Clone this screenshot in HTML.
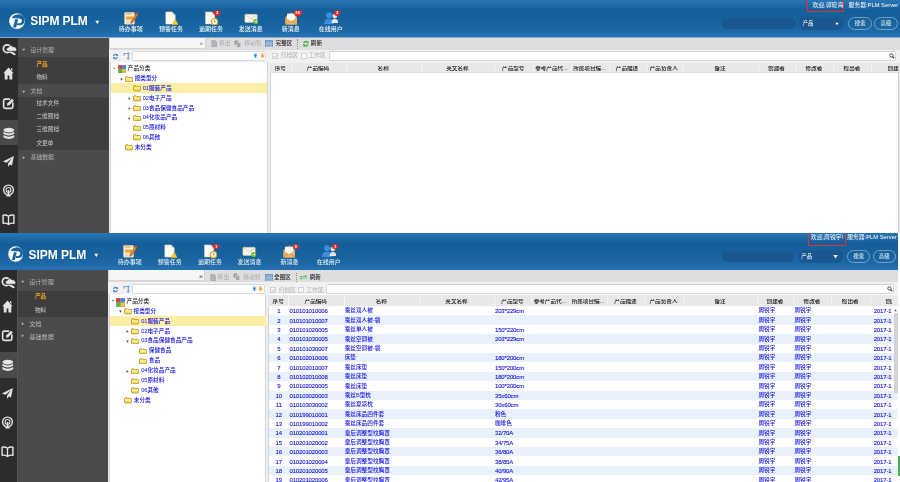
<!DOCTYPE html><html lang="zh-CN"><head><meta charset="utf-8"><title>SIPM PLM</title><style>
*{box-sizing:border-box;margin:0;padding:0}
html,body{width:900px;height:482px;overflow:hidden;background:#fff}
body{position:relative;font-family:"Liberation Sans","Noto Sans CJK SC",sans-serif;font-size:5.6px;color:#222;line-height:1}
.shot{position:absolute;left:0;width:900px;overflow:hidden;background:#fff;filter:blur(.3px)}
.a{position:absolute}
.hdr{position:absolute;left:0;top:0;height:37.9px;background:linear-gradient(#2a76b3 0%,#226dab 10%,#145e9a 27%,#17629d 55%,#1d6aa6 86%,#296fb2 91%,#1b72ae 96%,#8fb4d6 99%,#d8e2ec 100%)}
.title{position:absolute;color:#fff;font-weight:bold;font-size:12px;letter-spacing:-0.05px;white-space:nowrap}
.tl{position:absolute;color:#fff;font-size:6px;font-weight:500;white-space:nowrap;text-align:center;width:40px;opacity:.95}
.isb{position:absolute;left:0;background:#2c2c2c}
.msb{position:absolute;background:#4b4b4b}
.mh{position:absolute;left:0;right:0;color:#b4b4b4;font-size:5.9px;font-weight:400;white-space:nowrap}
.mc{position:absolute;left:0;right:0;background:#3e3e3e}
.mi{position:absolute;left:18.6px;color:#cdcdcd;font-size:5.65px;font-weight:400;white-space:nowrap}
.t{position:absolute;white-space:nowrap}
.tr{position:absolute;white-space:nowrap;font-size:5.65px;color:#0a0ae8;font-weight:500}
.gh{position:absolute;background:#e8e8e8;border-bottom:.5px solid #dcdcdc}
.ght{position:absolute;color:#111;font-size:5.6px;font-weight:500;white-space:nowrap;text-align:center}
.row{position:absolute;left:0;right:0}
.c{position:absolute;color:#1010e6;font-size:5.65px;font-weight:500;white-space:nowrap;top:0}
.n{-webkit-text-stroke:.1px #1010e6;font-size:6px;letter-spacing:-.15px;margin-top:-.2px}
.pill{position:absolute;border:.5px solid rgba(225,235,245,.45);border-radius:7px;color:#fff;font-size:5.4px;text-align:center}
</style></head><body>
<div class="shot" style="top:0;height:233px">
<div class="hdr" style="width:900px"></div>
<svg class="a" style="left:8.85px;top:12.85px" width="16" height="16.2" viewBox="0 0 32 32" preserveAspectRatio="none"><circle cx="16" cy="16" r="15.700" fill="#fdfdfd"/><path d="M5 8.800Q12 1.500 22 2.800Q31.800 5 31.300 15Q30.500 24.300 21 24.300L15.800 24.300L16.800 20.300L21 20.300Q25.800 19.800 26 15.200Q25.800 11.200 21.300 10.800L13 10.600Q8.500 10.600 5 8.800Z" fill="#1a64a4"/><path d="M12.200 12.600L18.300 12.600L14.300 28.600L8.200 28.600Z" fill="#1a64a4"/></svg>
<div class="title" style="left:30.2px;top:15.3px">SIPM PLM</div>
<svg class="a" style="left:95.3px;top:19.6px" width="4.6" height="4.6" viewBox="0 0 8 8"><path d="M0.5 1.5H7.5L4 7Z" fill="#fff"/></svg>
<svg class="a" style="left:123.50px;top:11.10px" width="14.4" height="14.4" viewBox="0 0 24 24"><rect x="1" y="2.500" width="16.500" height="19.500" rx="1.200" fill="#fbf8ee" stroke="#d2c9a8" stroke-width=".9"/><rect x="1.500" y="3" width="15.500" height="4.200" fill="#f3dfb4"/><path d="M3.500 5H12" stroke="#e3962a" stroke-width="1.300"/><rect x="3" y="9" width="12" height="5.500" fill="#f0a63a"/><path d="M3.500 17H9M3.500 19.800H9M11 17H14M11 19.800H14" stroke="#d9b27a" stroke-width="1.300"/><path d="M11.500 17.500L20.500 3.500L23.500 5.500L14.500 19.500L11 21Z" fill="#e27a2c" stroke="#9a531c" stroke-width=".6"/><path d="M20.500 3.500L21.800 1.600L24 3.200L23.500 5.500Z" fill="#d23b2b"/></svg>
<div class="tl" style="left:110.70px;top:25.6px;opacity:0.95">待办事项</div>
<svg class="a" style="left:163.80px;top:11.10px" width="14.4" height="14.4" viewBox="0 0 24 24"><path d="M3 1.500H13.500L18.700 6.700V21.800H3Z" fill="#fcfbf5" stroke="#d6d0bb" stroke-width=".9"/><path d="M13.500 1.500V6.700H18.700Z" fill="#e4dfcd"/><path d="M18.700 13.500L24 22.800H13.400Z" fill="#f3c934" stroke="#caa01a" stroke-width=".7"/></svg>
<div class="tl" style="left:151.00px;top:25.6px;opacity:0.95">预警任务</div>
<svg class="a" style="left:203.80px;top:11.10px" width="14.4" height="14.4" viewBox="0 0 24 24"><path d="M2.500 1.500H13L18 6.500V21.500H2.500Z" fill="#fcfbf5" stroke="#d6d0bb" stroke-width=".9"/><path d="M13 1.500V6.500H18Z" fill="#e4dfcd"/><circle cx="17.500" cy="17.800" r="5.300" fill="#fbf3dd" stroke="#e6a32a" stroke-width="2"/><path d="M17.500 15V18.200H19.800" stroke="#9a7a3a" stroke-width="1.100" fill="none"/></svg>
<div class="tl" style="left:191.00px;top:25.6px;opacity:0.95">逾期任务</div>
<svg class="a" style="left:243.50px;top:11.10px" width="14.4" height="14.4" viewBox="0 0 24 24"><rect x="1.500" y="5.500" width="20.500" height="13.500" rx="1.500" fill="#f8f5e9" stroke="#cfc8ae" stroke-width=".9"/><path d="M2 6L11.800 13.500L21.500 6" fill="none" stroke="#c9c2a8" stroke-width="1.100"/><circle cx="19.500" cy="17.500" r="4.300" fill="#6cba3e"/><path d="M17.300 17.500H21.500M19.800 15.700L21.700 17.500L19.800 19.300" stroke="#fff" stroke-width="1.100" fill="none"/></svg>
<div class="tl" style="left:230.70px;top:25.6px;opacity:0.95">发送消息</div>
<svg class="a" style="left:283.50px;top:11.10px" width="14.4" height="14.4" viewBox="0 0 24 24"><path d="M2.500 9.500L12 2.500L21.500 9.500V22.500H2.500Z" fill="#dd9a48"/><rect x="5" y="4.500" width="14" height="12" fill="#fcfbf7"/><path d="M2.500 10.500L12 17.500L21.500 10.500V22.500H2.500Z" fill="#ebb366"/><path d="M2.500 22.500L10 16M21.500 22.500L14 16" stroke="#c98a3a" stroke-width=".8"/></svg>
<div class="tl" style="left:270.70px;top:25.6px;opacity:0.95">新消息</div>
<svg class="a" style="left:323.50px;top:11.10px" width="14.4" height="14.4" viewBox="0 0 24 24"><circle cx="8.500" cy="7" r="4.800" fill="#3b8fe0"/><path d="M0 21.500Q0 12.800 8.500 12.800Q17 12.800 17 21.500Z" fill="#3b8fe0"/><circle cx="18" cy="8.500" r="3.800" fill="#ece7da"/><path d="M12.500 20Q12.500 13.500 18 13.500Q24 13.500 24 20Z" fill="#ece7da"/></svg>
<div class="tl" style="left:310.70px;top:25.6px;opacity:0.95">在线用户</div>
<div class="a" style="left:214.30px;top:10.40px;width:5.80px;height:5.80px;border-radius:2.9px;background:#e02a2a;color:#fff;font-size:4.2px;line-height:5.80px;text-align:center;font-weight:bold">2</div>
<div class="a" style="left:293.70px;top:10.40px;width:8.00px;height:5.80px;border-radius:2.9px;background:#e02a2a;color:#fff;font-size:4.2px;line-height:5.80px;text-align:center;font-weight:bold">26</div>
<div class="a" style="left:334.30px;top:10.40px;width:5.80px;height:5.80px;border-radius:2.9px;background:#e02a2a;color:#fff;font-size:4.2px;line-height:5.80px;text-align:center;font-weight:bold">2</div>
<div class="a" style="left:807.3px;top:-1px;width:36.700000000000045px;height:13.4px;border:1.15px solid #e8312f"></div>
<div class="t" style="left:812.4px;top:3.0px;color:#fff;font-size:5.85px">欢迎,郭晓海</div>
<div class="t" style="left:848.6px;top:3.0px;color:#fff;font-size:5.8px">服务器:PLM Server</div>
<div class="a" style="left:722px;top:18.2px;width:73.5px;height:11.000000000000002px;border-radius:5px;background:#1a5690"></div>
<div class="a" style="left:799.3px;top:17.4px;width:44.700000000000045px;height:12.600000000000001px;border-radius:6px;background:#1a5690;color:#fff;font-size:5.4px;line-height:12.600000000000001px;padding-left:3.3px">产品</div>
<svg class="a" style="left:834.8000000000001px;top:22.0px" width="3.8" height="3.8" viewBox="0 0 8 8"><path d="M0.5 1.5H7.5L4 7Z" fill="#fff"/></svg>
<div class="pill" style="left:848.3px;top:17.4px;width:23.700000000000045px;height:12.600000000000001px;line-height:11.400000000000002px">搜索</div>
<div class="pill" style="left:874px;top:17.4px;width:24px;height:12.600000000000001px;line-height:11.400000000000002px">高级</div>
<div class="isb" style="top:37.5px;width:17.9px;height:195.5px"></div>
<div class="a" style="left:0;top:120.3px;width:17.9px;height:25px;background:#4a4a4a"></div>
<svg class="a" style="left:1.80px;top:41.70px" width="15" height="15" viewBox="0 0 24 24"><circle cx="8.300" cy="10.700" r="6.100" fill="none" stroke="#e6e6e6" stroke-width="2.800"/><path d="M13.800 15.800L20.300 19.800" stroke="#e6e6e6" stroke-width="3" stroke-linecap="round"/><path d="M9.800 14.800a3 3 0 0 1 .2-6a4.300 4.300 0 0 1 7.800-.9a3.300 3.300 0 0 1 4.700 2.600a2.300 2.300 0 0 1-.6 4.300Z" fill="#e6e6e6" stroke="#2c2c2c" stroke-width="1.100"/></svg>
<svg class="a" style="left:2.20px;top:67.30px" width="13" height="13" viewBox="0 0 24 24"><path d="M12 1L2.500 11.500H5V23H10.300V15.500H13.700V23H19V11.500H21.500Z" fill="#e4e4e4"/><path d="M16.500 2.500H19V7.500L16.500 5Z" fill="#e4e4e4"/></svg>
<svg class="a" style="left:2.20px;top:97.00px" width="13" height="13" viewBox="0 0 24 24"><path d="M14 4H6Q3 4 3 7V18Q3 21 6 21H17Q20 21 20 18V11" fill="none" stroke="#e2e2e2" stroke-width="3" stroke-linecap="round"/><path d="M9 16L10 11.5L18.5 3L22 6.5L13.5 15Z" fill="#e2e2e2"/></svg>
<svg class="a" style="left:1.90px;top:126.90px" width="13.6" height="13.6" viewBox="0 0 24 24"><ellipse cx="12" cy="5.5" rx="9.5" ry="4" fill="#e6e6e6"/><path d="M2.5 8.5Q12 14.5 21.500 8.5V12Q12 18 2.5 12Z" fill="#e6e6e6"/><path d="M2.5 14Q12 20 21.5 14V18Q12 24 2.5 18Z" fill="#e6e6e6"/></svg>
<svg class="a" style="left:2.20px;top:154.50px" width="13" height="13" viewBox="0 0 24 24"><path d="M22 2L1.5 12L8.5 14.5L18 6L11 16V22L14.5 17.5L18.5 19.5Z" fill="#e2e2e2"/></svg>
<svg class="a" style="left:2.20px;top:183.50px" width="13" height="13" viewBox="0 0 24 24"><circle cx="12" cy="11" r="9" fill="none" stroke="#e2e2e2" stroke-width="2.6"/><circle cx="12" cy="11" r="4.4" fill="none" stroke="#e2e2e2" stroke-width="2"/><path d="M12 11V22" stroke="#e2e2e2" stroke-width="3"/><path d="M8 22H16" stroke="#e2e2e2" stroke-width="2.4"/></svg>
<svg class="a" style="left:2.20px;top:212.50px" width="13" height="13" viewBox="0 0 24 24"><path d="M12 6Q8 3 2 4V19Q8 18 12 21Q16 18 22 19V4Q16 3 12 6Z" fill="none" stroke="#e6e6e6" stroke-width="2.6" stroke-linejoin="round"/><path d="M12 6V21" stroke="#e6e6e6" stroke-width="2.4"/></svg>
<div class="msb" style="left:17.9px;top:37.5px;width:90.8px;height:195.5px">
<div class="mc" style="top:19.2px;height:27.4px"></div>
<div class="mc" style="top:59.9px;height:52.5px"></div>
<div class="mh" style="top:10.100000000000001px;left:12.5px;font-size:5.9px">设计管理</div><svg class="a" style="left:4.2px;top:10.9px" width="3.5" height="3.5" viewBox="0 0 8 8"><path d="M0.5 1.5H7.5L4 7Z" fill="#b4b4b4"/></svg>
<div class="mi" style="top:24.3px;color:#f0a11c;font-weight:bold">产品</div>
<div class="mi" style="top:37.5px">物料</div>
<div class="mh" style="top:51.199999999999996px;left:12.5px;font-size:5.9px">文档</div><svg class="a" style="left:4.2px;top:52.0px" width="3.5" height="3.5" viewBox="0 0 8 8"><path d="M0.5 1.5H7.5L4 7Z" fill="#b4b4b4"/></svg>
<div class="mi" style="top:63.7px">技术文件</div>
<div class="mi" style="top:76.8px">二维图档</div>
<div class="mi" style="top:89.9px">三维图档</div>
<div class="mi" style="top:103.0px">文更单</div>
<div class="mh" style="top:117.3px;left:12.5px;font-size:5.9px">基础数据</div><svg class="a" style="left:4.2px;top:118.1px" width="3.5" height="3.5" viewBox="0 0 8 8"><path d="M1.5 0.5V7.5L7 4Z" fill="#b4b4b4"/></svg>
</div>
<div class="a" style="left:108.7px;top:37.5px;width:791.3px;height:12px;background:#dedede"></div>
<div class="a" style="left:108.7px;top:37.5px;width:97px;height:11px;background:#f6f6f6;border:.5px solid #d4d4d4;border-top:none"></div>
<div class="t" style="left:200px;top:40.6px;font-size:5px;color:#555">»</div>
<svg class="a" style="left:211px;top:39.7px" width="6.5" height="7.5" viewBox="0 0 13 15"><path d="M1.500 1H8.500L11.500 4V14H1.500Z" fill="#b4b4b4" stroke="#9a9a9a" stroke-width="1"/></svg>
<div class="t" style="left:219.3px;top:40.7px;color:#a9a9a9">移出</div>
<svg class="a" style="left:234.2px;top:39.5px" width="7.500" height="8" viewBox="0 0 15 16"><rect x="1" y="1" width="7.500" height="8.500" fill="#9c9c9c"/><rect x="5.500" y="5.500" width="8" height="9" fill="#a6a6a6" stroke="#dedede" stroke-width="1"/></svg>
<div class="t" style="left:244.6px;top:40.7px;color:#a9a9a9">移动到</div>
<svg class="a" style="left:264.5px;top:39.8px" width="8" height="7.4" viewBox="0 0 16 15"><rect x=".8" y=".8" width="14.400" height="13.400" fill="#dbe7f3" stroke="#4a86c4" stroke-width="1.500"/><rect x="2.200" y="2.200" width="11.600" height="7.300" fill="#6fa8de"/><rect x="2.200" y="9.500" width="11.600" height="3.300" fill="#9aa4ae"/><path d="M3 8.500L6.500 5.500L9 7.500L11 6L13.500 8.500" stroke="#e8f2fb" stroke-width="1" fill="none"/></svg>
<div class="t" style="left:275.6px;top:40.7px;color:#222;font-weight:500">完整区</div>
<div class="a" style="left:297px;top:39.0px;width:0;height:9.5px;border-left:.7px dotted #8a8a8a"></div>
<svg class="a" style="left:301.5px;top:39.8px" width="7.6" height="7.6" viewBox="0 0 16 16"><path d="M2.500 7A5.500 5.500 0 0 1 12 3.500L13.500 2V7H8.500L10.300 5.200A3.400 3.400 0 0 0 4.800 7Z" fill="#3aa83a"/><path d="M13.500 9A5.500 5.500 0 0 1 4 12.500L2.500 14V9H7.500L5.700 10.800A3.400 3.400 0 0 0 11.200 9Z" fill="#3aa83a"/></svg>
<div class="t" style="left:310.8px;top:40.7px;color:#222;font-weight:500">刷新</div>
<div class="a" style="left:108.7px;top:49.5px;width:791.3px;height:13.5px;background:#f1f1f1"></div>
<svg class="a" style="left:112.400px;top:52.5px" width="7" height="7" viewBox="0 0 16 16"><path d="M2.500 7A5.500 5.500 0 0 1 12 3.500L13.500 2V7H8.500L10.300 5.200A3.400 3.400 0 0 0 4.800 7Z" fill="#3a82d8"/><path d="M13.500 9A5.500 5.500 0 0 1 4 12.500L2.500 14V9H7.500L5.700 10.800A3.400 3.400 0 0 0 11.200 9Z" fill="#3a82d8"/></svg>
<svg class="a" style="left:122.800px;top:52.1px" width="7.500" height="8" viewBox="0 0 15 16"><path d="M2 3H7M2 3V7M10.500 2V14M8.500 4L10.500 1.500L12.500 4M8.500 12L10.500 14.500L12.500 12" stroke="#4a80c8" stroke-width="1.700" fill="none"/></svg>
<div class="a" style="left:132.4px;top:51.3px;width:133.6px;height:9.3px;background:#fff;border:.6px solid #d9d9d9;border-radius:1.5px"></div>
<svg class="a" style="left:253px;top:53.1px" width="5" height="5.400" viewBox="0 0 10 11"><rect width="10" height="11" fill="#dbeaf8"/><path d="M5 1.500L8.500 5.500H6.300V9.500H3.700V5.500H1.500Z" fill="#2f86d6"/></svg>
<svg class="a" style="left:259.8px;top:53.1px" width="5" height="5.400" viewBox="0 0 10 11"><rect width="10" height="11" fill="#fdebd2"/><path d="M5 9.500L1.500 5.500H3.700V1.500H6.300V5.500H8.500Z" fill="#f08a1c"/></svg>
<div class="a" style="left:272.2px;top:52.8px;width:6px;height:6px;border:.6px solid #d2d2d2;background:#fafafa"></div>
<svg class="a" style="left:273.0px;top:53.5px" width="4.600" height="4.600" viewBox="0 0 10 10"><path d="M1.500 5L4 8L8.500 1.500" stroke="#a8a8a8" stroke-width="1.600" fill="none"/></svg>
<div class="t" style="left:280.59999999999997px;top:53.4px;color:#b0b0b0;font-size:5.800px">归档区</div>
<div class="a" style="left:300.59999999999997px;top:52.8px;width:6px;height:6px;border:.6px solid #d2d2d2;background:#fcfcfc"></div>
<div class="t" style="left:308.5px;top:53.4px;color:#b0b0b0;font-size:5.800px">工作区</div>
<div class="a" style="left:328.59999999999997px;top:51.3px;width:567.6000000000001px;height:9.3px;background:#fff;border:.6px solid #d2d2d2;border-radius:1.500px"></div>
<svg class="a" style="left:889.4px;top:53.2px" width="5.800" height="5.800" viewBox="0 0 12 12"><circle cx="5" cy="5" r="3.400" fill="none" stroke="#333" stroke-width="1.800"/><path d="M7.500 7.500L11 11" stroke="#333" stroke-width="2.400"/></svg>
<div class="a" style="left:110px;top:62px;width:157.5px;height:171px;background:#fff;border-left:.5px solid #d4d4d4;border-right:.5px solid #d0d0d0"></div>
<div class="a" style="left:108.7px;top:62px;width:1.6px;height:171px;background:#e9e9e9"></div>
<div class="a" style="left:267.5px;top:49.5px;width:2.7px;height:183.5px;background:#f0f0f0"></div>
<div class="a" style="left:110.5px;top:83.3px;width:156.5px;height:9.6px;background:#fdeea6"></div>
<svg class="a" style="left:112.8px;top:66.5px" width="2.6" height="2.6" viewBox="0 0 8 8"><path d="M1.5 0.5V7.5L7 4Z" fill="#555"/></svg>
<svg class="a" style="left:117.9px;top:65.0px" width="8.2" height="8.2" viewBox="0 0 16 16"><rect width="16" height="16" fill="#555" opacity=".55"/><rect x="0.5" y="0.5" width="7" height="7" fill="#e23b2e"/><rect x="8.5" y="0.5" width="7" height="7" fill="#3b86e0"/><rect x="0.5" y="8.5" width="7" height="7" fill="#59b847"/><rect x="8.5" y="8.5" width="7" height="7" fill="#f2c230"/></svg>
<div class="tr" style="left:127.8px;top:66.0px;color:#222">产品分类</div>
<svg class="a" style="left:119.8px;top:77.60000000000001px" width="3" height="3" viewBox="0 0 8 8"><path d="M0.5 1.5H7.5L4 7Z" fill="#444"/></svg>
<svg class="a" style="left:125.1px;top:75.65px" width="8.2" height="6.4" viewBox="0 0 16 13" preserveAspectRatio="none"><path d="M1 3.200Q1 1.500 2.600 1.500H5.800L7.200 3H13.400Q15 3 15 4.600V10.400Q15 12 13.400 12H2.600Q1 12 1 10.400Z" fill="#f3d858" stroke="#b08a14" stroke-width="1.500"/><path d="M2 4.600H14V7.500H2Z" fill="#fcf3b4"/><path d="M2 7.500H14V9H2Z" fill="#f8e68a"/></svg>
<div class="tr" style="left:134.7px;top:76.10000000000001px">按类型分</div>
<svg class="a" style="left:132.70000000000002px;top:85.45px" width="8.2" height="6.4" viewBox="0 0 16 13" preserveAspectRatio="none"><path d="M1 3.200Q1 1.500 2.600 1.500H5.800L7.200 3H13.400Q15 3 15 4.600V10.400Q15 12 13.400 12H2.600Q1 12 1 10.400Z" fill="#f3d858" stroke="#b08a14" stroke-width="1.500"/><path d="M2 4.600H14V7.500H2Z" fill="#fcf3b4"/><path d="M2 7.500H14V9H2Z" fill="#f8e68a"/></svg>
<div class="tr" style="left:142.7px;top:85.9px">01服装产品</div>
<svg class="a" style="left:127.6px;top:97.2px" width="3" height="3" viewBox="0 0 8 8"><path d="M1.5 0.5V7.5L7 4Z" fill="#444"/></svg>
<svg class="a" style="left:132.70000000000002px;top:95.25px" width="8.2" height="6.4" viewBox="0 0 16 13" preserveAspectRatio="none"><path d="M1 3.200Q1 1.500 2.600 1.500H5.800L7.200 3H13.400Q15 3 15 4.600V10.400Q15 12 13.400 12H2.600Q1 12 1 10.400Z" fill="#f3d858" stroke="#b08a14" stroke-width="1.500"/><path d="M2 4.600H14V7.500H2Z" fill="#fcf3b4"/><path d="M2 7.500H14V9H2Z" fill="#f8e68a"/></svg>
<div class="tr" style="left:142.7px;top:95.7px">02电子产品</div>
<svg class="a" style="left:127.6px;top:107.0px" width="3" height="3" viewBox="0 0 8 8"><path d="M1.5 0.5V7.5L7 4Z" fill="#444"/></svg>
<svg class="a" style="left:132.70000000000002px;top:105.05px" width="8.2" height="6.4" viewBox="0 0 16 13" preserveAspectRatio="none"><path d="M1 3.200Q1 1.500 2.600 1.500H5.800L7.200 3H13.400Q15 3 15 4.600V10.400Q15 12 13.400 12H2.600Q1 12 1 10.400Z" fill="#f3d858" stroke="#b08a14" stroke-width="1.500"/><path d="M2 4.600H14V7.500H2Z" fill="#fcf3b4"/><path d="M2 7.500H14V9H2Z" fill="#f8e68a"/></svg>
<div class="tr" style="left:142.7px;top:105.5px">03食品保健食品产品</div>
<svg class="a" style="left:127.6px;top:116.80000000000001px" width="3" height="3" viewBox="0 0 8 8"><path d="M1.5 0.5V7.5L7 4Z" fill="#444"/></svg>
<svg class="a" style="left:132.70000000000002px;top:114.85000000000001px" width="8.2" height="6.4" viewBox="0 0 16 13" preserveAspectRatio="none"><path d="M1 3.200Q1 1.500 2.600 1.500H5.800L7.200 3H13.400Q15 3 15 4.600V10.400Q15 12 13.400 12H2.600Q1 12 1 10.400Z" fill="#f3d858" stroke="#b08a14" stroke-width="1.500"/><path d="M2 4.600H14V7.500H2Z" fill="#fcf3b4"/><path d="M2 7.500H14V9H2Z" fill="#f8e68a"/></svg>
<div class="tr" style="left:142.7px;top:115.30000000000001px">04化妆品产品</div>
<svg class="a" style="left:132.70000000000002px;top:124.64999999999999px" width="8.2" height="6.4" viewBox="0 0 16 13" preserveAspectRatio="none"><path d="M1 3.200Q1 1.500 2.600 1.500H5.800L7.200 3H13.400Q15 3 15 4.600V10.400Q15 12 13.400 12H2.600Q1 12 1 10.400Z" fill="#f3d858" stroke="#b08a14" stroke-width="1.500"/><path d="M2 4.600H14V7.500H2Z" fill="#fcf3b4"/><path d="M2 7.500H14V9H2Z" fill="#f8e68a"/></svg>
<div class="tr" style="left:142.7px;top:125.1px">05原材料</div>
<svg class="a" style="left:132.70000000000002px;top:134.45000000000002px" width="8.2" height="6.4" viewBox="0 0 16 13" preserveAspectRatio="none"><path d="M1 3.200Q1 1.500 2.600 1.500H5.800L7.200 3H13.400Q15 3 15 4.600V10.400Q15 12 13.400 12H2.600Q1 12 1 10.400Z" fill="#f3d858" stroke="#b08a14" stroke-width="1.500"/><path d="M2 4.600H14V7.500H2Z" fill="#fcf3b4"/><path d="M2 7.500H14V9H2Z" fill="#f8e68a"/></svg>
<div class="tr" style="left:142.7px;top:134.9px">06其他</div>
<svg class="a" style="left:125.1px;top:144.25000000000003px" width="8.2" height="6.4" viewBox="0 0 16 13" preserveAspectRatio="none"><path d="M1 3.200Q1 1.500 2.600 1.500H5.800L7.200 3H13.400Q15 3 15 4.600V10.400Q15 12 13.400 12H2.600Q1 12 1 10.400Z" fill="#f3d858" stroke="#b08a14" stroke-width="1.500"/><path d="M2 4.600H14V7.500H2Z" fill="#fcf3b4"/><path d="M2 7.500H14V9H2Z" fill="#f8e68a"/></svg>
<div class="tr" style="left:134.7px;top:144.70000000000002px">未分类</div>
<div class="a" style="left:270px;top:62.7px;width:630px;height:170.3px;background:#fff;border-left:.5px solid #d0d0d0"></div>
<div class="gh" style="left:270px;top:62.7px;width:630px;height:10.0px"></div>
<div class="ght" style="left:270px;width:20.5px;top:65.7px;overflow:hidden">序号</div>
<div class="ght" style="left:290.5px;width:55.0px;top:65.7px;overflow:hidden">产品编码</div>
<div class="a" style="left:290.5px;top:63.7px;width:.5px;height:8.0px;background:#f4f4f4;box-shadow:-.4px 0 0 #e0e0e0"></div>
<div class="ght" style="left:345.5px;width:75.30000000000001px;top:65.7px;overflow:hidden">名称</div>
<div class="a" style="left:345.5px;top:63.7px;width:.5px;height:8.0px;background:#f4f4f4;box-shadow:-.4px 0 0 #e0e0e0"></div>
<div class="ght" style="left:420.8px;width:73.19999999999999px;top:65.7px;overflow:hidden">英文名称</div>
<div class="a" style="left:420.8px;top:63.7px;width:.5px;height:8.0px;background:#f4f4f4;box-shadow:-.4px 0 0 #e0e0e0"></div>
<div class="ght" style="left:494px;width:38.5px;top:65.7px;overflow:hidden">产品型号</div>
<div class="a" style="left:494px;top:63.7px;width:.5px;height:8.0px;background:#f4f4f4;box-shadow:-.4px 0 0 #e0e0e0"></div>
<div class="ght" style="left:532.5px;width:38.0px;top:65.7px;overflow:hidden">参考产品代...</div>
<div class="a" style="left:532.5px;top:63.7px;width:.5px;height:8.0px;background:#f4f4f4;box-shadow:-.4px 0 0 #e0e0e0"></div>
<div class="ght" style="left:570.5px;width:38.0px;top:65.7px;overflow:hidden">所属项目编...</div>
<div class="a" style="left:570.5px;top:63.7px;width:.5px;height:8.0px;background:#f4f4f4;box-shadow:-.4px 0 0 #e0e0e0"></div>
<div class="ght" style="left:608.5px;width:37.0px;top:65.7px;overflow:hidden">产品描述</div>
<div class="a" style="left:608.5px;top:63.7px;width:.5px;height:8.0px;background:#f4f4f4;box-shadow:-.4px 0 0 #e0e0e0"></div>
<div class="ght" style="left:645.5px;width:36.5px;top:65.7px;overflow:hidden">产品负责人</div>
<div class="a" style="left:645.5px;top:63.7px;width:.5px;height:8.0px;background:#f4f4f4;box-shadow:-.4px 0 0 #e0e0e0"></div>
<div class="ght" style="left:682px;width:76px;top:65.7px;overflow:hidden">备注</div>
<div class="a" style="left:682px;top:63.7px;width:.5px;height:8.0px;background:#f4f4f4;box-shadow:-.4px 0 0 #e0e0e0"></div>
<div class="ght" style="left:758px;width:37px;top:65.7px;overflow:hidden">创建者</div>
<div class="a" style="left:758px;top:63.7px;width:.5px;height:8.0px;background:#f4f4f4;box-shadow:-.4px 0 0 #e0e0e0"></div>
<div class="ght" style="left:795px;width:38px;top:65.7px;overflow:hidden">修改者</div>
<div class="a" style="left:795px;top:63.7px;width:.5px;height:8.0px;background:#f4f4f4;box-shadow:-.4px 0 0 #e0e0e0"></div>
<div class="ght" style="left:833px;width:38px;top:65.7px;overflow:hidden">检出者</div>
<div class="a" style="left:833px;top:63.7px;width:.5px;height:8.0px;background:#f4f4f4;box-shadow:-.4px 0 0 #e0e0e0"></div>
<div class="ght" style="left:887.6px;top:65.7px;text-align:left;overflow:hidden;width:30px">创建时间</div>
<div class="a" style="left:871px;top:63.7px;width:.5px;height:8.0px;background:#f4f4f4;box-shadow:-.4px 0 0 #e0e0e0"></div>
<div class="a" style="left:897.700px;top:62.700px;width:2.300px;height:170.3px;background:#e6e6e6;border-left:.5px solid #cfcfcf"></div>
</div>
<div class="shot" style="top:232.8px;height:249.2px">
<div class="hdr" style="width:898px"></div>
<svg class="a" style="left:7.95px;top:13.50px" width="15.3" height="15.8" viewBox="0 0 32 32" preserveAspectRatio="none"><circle cx="16" cy="16" r="15.700" fill="#fdfdfd"/><path d="M5 8.800Q12 1.500 22 2.800Q31.800 5 31.300 15Q30.500 24.300 21 24.300L15.800 24.300L16.800 20.300L21 20.300Q25.800 19.800 26 15.200Q25.800 11.200 21.300 10.800L13 10.600Q8.500 10.600 5 8.800Z" fill="#1a64a4"/><path d="M12.200 12.600L18.300 12.600L14.300 28.600L8.200 28.600Z" fill="#1a64a4"/></svg>
<div class="title" style="left:28.6px;top:15.9px">SIPM PLM</div>
<svg class="a" style="left:94px;top:20.2px" width="4.6" height="4.6" viewBox="0 0 8 8"><path d="M0.5 1.5H7.5L4 7Z" fill="#fff"/></svg>
<svg class="a" style="left:122.50px;top:11.50px" width="14.4" height="14.4" viewBox="0 0 24 24"><rect x="1" y="2.500" width="16.500" height="19.500" rx="1.200" fill="#fbf8ee" stroke="#d2c9a8" stroke-width=".9"/><rect x="1.500" y="3" width="15.500" height="4.200" fill="#f3dfb4"/><path d="M3.500 5H12" stroke="#e3962a" stroke-width="1.300"/><rect x="3" y="9" width="12" height="5.500" fill="#f0a63a"/><path d="M3.500 17H9M3.500 19.800H9M11 17H14M11 19.800H14" stroke="#d9b27a" stroke-width="1.300"/><path d="M11.500 17.500L20.500 3.500L23.500 5.500L14.500 19.500L11 21Z" fill="#e27a2c" stroke="#9a531c" stroke-width=".6"/><path d="M20.500 3.500L21.800 1.600L24 3.200L23.500 5.500Z" fill="#d23b2b"/></svg>
<div class="tl" style="left:109.70px;top:26.2px;opacity:0.88">待办事项</div>
<svg class="a" style="left:162.50px;top:11.50px" width="14.4" height="14.4" viewBox="0 0 24 24"><path d="M3 1.500H13.500L18.700 6.700V21.800H3Z" fill="#fcfbf5" stroke="#d6d0bb" stroke-width=".9"/><path d="M13.500 1.500V6.700H18.700Z" fill="#e4dfcd"/><path d="M18.700 13.500L24 22.800H13.400Z" fill="#f3c934" stroke="#caa01a" stroke-width=".7"/></svg>
<div class="tl" style="left:149.70px;top:26.2px;opacity:0.88">预警任务</div>
<svg class="a" style="left:202.70px;top:11.50px" width="14.4" height="14.4" viewBox="0 0 24 24"><path d="M2.500 1.500H13L18 6.500V21.500H2.500Z" fill="#fcfbf5" stroke="#d6d0bb" stroke-width=".9"/><path d="M13 1.500V6.500H18Z" fill="#e4dfcd"/><circle cx="17.500" cy="17.800" r="5.300" fill="#fbf3dd" stroke="#e6a32a" stroke-width="2"/><path d="M17.500 15V18.200H19.800" stroke="#9a7a3a" stroke-width="1.100" fill="none"/></svg>
<div class="tl" style="left:189.90px;top:26.2px;opacity:0.88">逾期任务</div>
<svg class="a" style="left:242.40px;top:11.50px" width="14.4" height="14.4" viewBox="0 0 24 24"><rect x="1.500" y="5.500" width="20.500" height="13.500" rx="1.500" fill="#f8f5e9" stroke="#cfc8ae" stroke-width=".9"/><path d="M2 6L11.800 13.500L21.500 6" fill="none" stroke="#c9c2a8" stroke-width="1.100"/><circle cx="19.500" cy="17.500" r="4.300" fill="#6cba3e"/><path d="M17.300 17.500H21.500M19.800 15.700L21.700 17.500L19.800 19.300" stroke="#fff" stroke-width="1.100" fill="none"/></svg>
<div class="tl" style="left:229.60px;top:26.2px;opacity:0.88">发送消息</div>
<svg class="a" style="left:282.20px;top:11.50px" width="14.4" height="14.4" viewBox="0 0 24 24"><path d="M2.500 9.500L12 2.500L21.500 9.500V22.500H2.500Z" fill="#dd9a48"/><rect x="5" y="4.500" width="14" height="12" fill="#fcfbf7"/><path d="M2.500 10.500L12 17.500L21.500 10.500V22.500H2.500Z" fill="#ebb366"/><path d="M2.500 22.500L10 16M21.500 22.500L14 16" stroke="#c98a3a" stroke-width=".8"/></svg>
<div class="tl" style="left:269.40px;top:26.2px;opacity:0.88">新消息</div>
<svg class="a" style="left:321.60px;top:11.50px" width="14.4" height="14.4" viewBox="0 0 24 24"><circle cx="8.500" cy="7" r="4.800" fill="#3b8fe0"/><path d="M0 21.500Q0 12.800 8.500 12.800Q17 12.800 17 21.500Z" fill="#3b8fe0"/><circle cx="18" cy="8.500" r="3.800" fill="#ece7da"/><path d="M12.500 20Q12.500 13.500 18 13.500Q24 13.500 24 20Z" fill="#ece7da"/></svg>
<div class="tl" style="left:308.80px;top:26.2px;opacity:0.88">在线用户</div>
<div class="a" style="left:213.20px;top:10.80px;width:5.80px;height:5.80px;border-radius:2.9px;background:#e02a2a;color:#fff;font-size:4.2px;line-height:5.80px;text-align:center;font-weight:bold">1</div>
<div class="a" style="left:292.80px;top:10.80px;width:5.80px;height:5.80px;border-radius:2.9px;background:#e02a2a;color:#fff;font-size:4.2px;line-height:5.80px;text-align:center;font-weight:bold">9</div>
<div class="a" style="left:332.40px;top:10.80px;width:5.80px;height:5.80px;border-radius:2.9px;background:#e02a2a;color:#fff;font-size:4.2px;line-height:5.80px;text-align:center;font-weight:bold">1</div>
<div class="a" style="left:808px;top:-0.8px;width:37.700000000000045px;height:13.700000000000001px;border:1.15px solid #e8312f"></div>
<div class="t" style="left:810.8px;top:1.8px;color:#fff;font-size:5.85px">欢迎,周锐宇!</div>
<div class="t" style="left:847.2px;top:1.8px;color:#fff;font-size:5.8px">服务器:PLM Server</div>
<div class="a" style="left:722px;top:18.400000000000002px;width:72px;height:10.999999999999998px;border-radius:5px;background:#1a5690"></div>
<div class="a" style="left:798px;top:17.6px;width:44.5px;height:12.599999999999998px;border-radius:6px;background:#1a5690;color:#fff;font-size:5.4px;line-height:12.599999999999998px;padding-left:3.3px">产品</div>
<svg class="a" style="left:832.6px;top:21.499999999999996px" width="5.2" height="5.2" viewBox="0 0 8 8"><path d="M0.5 1.5H7.5L4 7Z" fill="#fff"/></svg>
<div class="pill" style="left:846.8px;top:17.6px;width:23.700000000000045px;height:12.599999999999998px;line-height:11.399999999999999px">搜索</div>
<div class="pill" style="left:872.8px;top:17.6px;width:22.90000000000009px;height:12.599999999999998px;line-height:11.399999999999999px">高级</div>
<div class="isb" style="top:37.3px;width:16.9px;height:211.89999999999998px"></div>
<div class="a" style="left:0;top:119.6px;width:16.9px;height:25.2px;background:#4a4a4a"></div>
<svg class="a" style="left:0.60px;top:42.10px" width="15" height="15" viewBox="0 0 24 24"><circle cx="8.300" cy="10.700" r="6.100" fill="none" stroke="#e6e6e6" stroke-width="2.800"/><path d="M13.800 15.800L20.300 19.800" stroke="#e6e6e6" stroke-width="3" stroke-linecap="round"/><path d="M9.800 14.800a3 3 0 0 1 .2-6a4.300 4.300 0 0 1 7.800-.9a3.300 3.300 0 0 1 4.700 2.600a2.300 2.300 0 0 1-.6 4.300Z" fill="#e6e6e6" stroke="#2c2c2c" stroke-width="1.100"/></svg>
<svg class="a" style="left:1.00px;top:67.00px" width="13" height="13" viewBox="0 0 24 24"><path d="M12 1L2.500 11.500H5V23H10.300V15.500H13.700V23H19V11.500H21.500Z" fill="#e4e4e4"/><path d="M16.500 2.500H19V7.500L16.500 5Z" fill="#e4e4e4"/></svg>
<svg class="a" style="left:1.00px;top:96.10px" width="13" height="13" viewBox="0 0 24 24"><path d="M14 4H6Q3 4 3 7V18Q3 21 6 21H17Q20 21 20 18V11" fill="none" stroke="#e2e2e2" stroke-width="3" stroke-linecap="round"/><path d="M9 16L10 11.5L18.5 3L22 6.5L13.5 15Z" fill="#e2e2e2"/></svg>
<svg class="a" style="left:0.70px;top:126.60px" width="13.6" height="13.6" viewBox="0 0 24 24"><ellipse cx="12" cy="5.5" rx="9.5" ry="4" fill="#e6e6e6"/><path d="M2.5 8.5Q12 14.5 21.500 8.5V12Q12 18 2.5 12Z" fill="#e6e6e6"/><path d="M2.5 14Q12 20 21.5 14V18Q12 24 2.5 18Z" fill="#e6e6e6"/></svg>
<svg class="a" style="left:1.00px;top:154.70px" width="13" height="13" viewBox="0 0 24 24"><path d="M22 2L1.5 12L8.5 14.5L18 6L11 16V22L14.5 17.5L18.5 19.5Z" fill="#e2e2e2"/></svg>
<svg class="a" style="left:1.00px;top:183.70px" width="13" height="13" viewBox="0 0 24 24"><circle cx="12" cy="11" r="9" fill="none" stroke="#e2e2e2" stroke-width="2.6"/><circle cx="12" cy="11" r="4.4" fill="none" stroke="#e2e2e2" stroke-width="2"/><path d="M12 11V22" stroke="#e2e2e2" stroke-width="3"/><path d="M8 22H16" stroke="#e2e2e2" stroke-width="2.4"/></svg>
<svg class="a" style="left:1.00px;top:212.00px" width="13" height="13" viewBox="0 0 24 24"><path d="M12 6Q8 3 2 4V19Q8 18 12 21Q16 18 22 19V4Q16 3 12 6Z" fill="none" stroke="#e6e6e6" stroke-width="2.6" stroke-linejoin="round"/><path d="M12 6V21" stroke="#e6e6e6" stroke-width="2.4"/></svg>
<div class="msb" style="left:16.9px;top:37.3px;width:90.8px;border-left:.5px solid #565656;height:211.89999999999998px">
<div class="mc" style="top:20.6px;height:26.1px"></div>
<div class="mh" style="top:8.899999999999999px;left:11.3px;font-size:6.2px">设计管理</div><svg class="a" style="left:3.6px;top:9.7px" width="3.5" height="3.5" viewBox="0 0 8 8"><path d="M0.5 1.5H7.5L4 7Z" fill="#b4b4b4"/></svg>
<div class="mi" style="left:17.1px;top:24.2px;color:#f0a11c;font-weight:bold">产品</div>
<div class="mi" style="left:17.1px;top:37.9px">物料</div>
<div class="mh" style="top:50.8px;left:11.3px;font-size:6.2px">文档</div><svg class="a" style="left:3.6px;top:51.6px" width="3.5" height="3.5" viewBox="0 0 8 8"><path d="M1.5 0.5V7.5L7 4Z" fill="#b4b4b4"/></svg>
<div class="mh" style="top:63.599999999999994px;left:11.3px;font-size:6.2px">基础数据</div><svg class="a" style="left:3.6px;top:64.39999999999999px" width="3.5" height="3.5" viewBox="0 0 8 8"><path d="M1.5 0.5V7.5L7 4Z" fill="#b4b4b4"/></svg>
</div>
<div class="a" style="left:107.7px;top:37.3px;width:790.3px;height:12px;background:#dedede"></div>
<div class="a" style="left:107.7px;top:37.3px;width:97px;height:11.4px;background:#f6f6f6;border:.5px solid #d4d4d4;border-top:none"></div>
<div class="t" style="left:198.7px;top:40.1px;font-size:7.6px;color:#444">×</div>
<svg class="a" style="left:209.5px;top:40.800000000000004px" width="6.5" height="7.5" viewBox="0 0 13 15"><path d="M1.500 1H8.500L11.500 4V14H1.500Z" fill="#b4b4b4" stroke="#9a9a9a" stroke-width="1"/></svg>
<div class="t" style="left:217.8px;top:41.800000000000004px;color:#a9a9a9">移出</div>
<svg class="a" style="left:232.7px;top:40.6px" width="7.500" height="8" viewBox="0 0 15 16"><rect x="1" y="1" width="7.500" height="8.500" fill="#9c9c9c"/><rect x="5.500" y="5.500" width="8" height="9" fill="#a6a6a6" stroke="#dedede" stroke-width="1"/></svg>
<div class="t" style="left:243.4px;top:41.800000000000004px;color:#a9a9a9">移动到</div>
<svg class="a" style="left:264.5px;top:40.9px" width="8" height="7.4" viewBox="0 0 16 15"><rect x=".8" y=".8" width="14.400" height="13.400" fill="#dbe7f3" stroke="#4a86c4" stroke-width="1.500"/><rect x="2.200" y="2.200" width="11.600" height="7.300" fill="#6fa8de"/><rect x="2.200" y="9.500" width="11.600" height="3.300" fill="#9aa4ae"/><path d="M3 8.500L6.500 5.500L9 7.500L11 6L13.500 8.500" stroke="#e8f2fb" stroke-width="1" fill="none"/></svg>
<div class="t" style="left:274.1px;top:41.800000000000004px;color:#222;font-weight:500">全图区</div>
<div class="a" style="left:295.5px;top:40.1px;width:0;height:9.5px;border-left:.7px dotted #8a8a8a"></div>
<svg class="a" style="left:299.1px;top:41.2px" width="8.800" height="6.600" viewBox="0 0 18 13"><path d="M1 4.500H12V1.500L17 5.500H1Z" fill="#2fae3c"/><path d="M17 8.500H6V11.500L1 7.500H17Z" fill="#2fae3c"/></svg>
<div class="t" style="left:309.75px;top:41.800000000000004px;color:#222;font-weight:500">刷新</div>
<div class="a" style="left:107.7px;top:49.2px;width:790.3px;height:12.4px;background:#f1f1f1"></div>
<svg class="a" style="left:112.400px;top:52.9px" width="7" height="7" viewBox="0 0 16 16"><path d="M2.500 7A5.500 5.500 0 0 1 12 3.500L13.500 2V7H8.500L10.300 5.200A3.400 3.400 0 0 0 4.800 7Z" fill="#3a82d8"/><path d="M13.500 9A5.500 5.500 0 0 1 4 12.500L2.500 14V9H7.500L5.700 10.800A3.400 3.400 0 0 0 11.200 9Z" fill="#3a82d8"/></svg>
<svg class="a" style="left:122.800px;top:52.5px" width="7.500" height="8" viewBox="0 0 15 16"><path d="M2 3H7M2 3V7M10.500 2V14M8.500 4L10.500 1.500L12.500 4M8.500 12L10.500 14.500L12.500 12" stroke="#4a80c8" stroke-width="1.700" fill="none"/></svg>
<div class="a" style="left:131.5px;top:51.699999999999996px;width:133.0px;height:9.3px;background:#fff;border:.6px solid #d9d9d9;border-radius:1.5px"></div>
<svg class="a" style="left:251.5px;top:53.5px" width="5" height="5.400" viewBox="0 0 10 11"><rect width="10" height="11" fill="#dbeaf8"/><path d="M5 1.500L8.500 5.500H6.300V9.500H3.700V5.500H1.500Z" fill="#2f86d6"/></svg>
<svg class="a" style="left:258.3px;top:53.5px" width="5" height="5.400" viewBox="0 0 10 11"><rect width="10" height="11" fill="#fdebd2"/><path d="M5 9.500L1.500 5.500H3.700V1.500H6.300V5.500H8.500Z" fill="#f08a1c"/></svg>
<div class="a" style="left:270.0px;top:54.4px;width:6px;height:6px;border:.6px solid #d2d2d2;background:#fafafa"></div>
<svg class="a" style="left:270.8px;top:55.1px" width="4.600" height="4.600" viewBox="0 0 10 10"><path d="M1.500 5L4 8L8.500 1.500" stroke="#a8a8a8" stroke-width="1.600" fill="none"/></svg>
<div class="t" style="left:278.4px;top:55.0px;color:#b0b0b0;font-size:5.800px">归档区</div>
<div class="a" style="left:298.4px;top:54.4px;width:6px;height:6px;border:.6px solid #d2d2d2;background:#fcfcfc"></div>
<div class="t" style="left:306.3px;top:55.0px;color:#b0b0b0;font-size:5.800px">工作区</div>
<div class="a" style="left:326.4px;top:51.699999999999996px;width:567.8000000000001px;height:9.3px;background:#fff;border:.6px solid #d2d2d2;border-radius:1.500px"></div>
<svg class="a" style="left:887.4px;top:53.6px" width="5.800" height="5.800" viewBox="0 0 12 12"><circle cx="5" cy="5" r="3.400" fill="none" stroke="#333" stroke-width="1.800"/><path d="M7.500 7.500L11 11" stroke="#333" stroke-width="2.400"/></svg>
<div class="a" style="left:109.4px;top:61.6px;width:156.8px;height:187.6px;background:#fff;border-left:.5px solid #d4d4d4;border-right:.5px solid #d0d0d0"></div>
<div class="a" style="left:107.7px;top:61.6px;width:1.7px;height:187.6px;background:#e9e9e9"></div>
<div class="a" style="left:266.2px;top:49.2px;width:2.6px;height:200.0px;background:#f0f0f0"></div>
<div class="a" style="left:110px;top:83.6px;width:155.6px;height:9.3px;background:#fdeea6"></div>
<svg class="a" style="left:111.6px;top:66.7px" width="2.6" height="2.6" viewBox="0 0 8 8"><path d="M1.5 0.5V7.5L7 4Z" fill="#555"/></svg>
<svg class="a" style="left:116.0px;top:64.8px" width="9" height="9" viewBox="0 0 16 16"><rect width="16" height="16" fill="#555" opacity=".55"/><rect x="0.5" y="0.5" width="7" height="7" fill="#e23b2e"/><rect x="8.5" y="0.5" width="7" height="7" fill="#3b86e0"/><rect x="0.5" y="8.5" width="7" height="7" fill="#59b847"/><rect x="8.5" y="8.5" width="7" height="7" fill="#f2c230"/></svg>
<div class="tr" style="left:126.5px;top:66.20px;color:#222">产品分类</div>
<svg class="a" style="left:119px;top:77.57000000000001px" width="3" height="3" viewBox="0 0 8 8"><path d="M0.5 1.5H7.5L4 7Z" fill="#444"/></svg>
<svg class="a" style="left:123.89999999999999px;top:75.62px" width="8.2" height="6.4" viewBox="0 0 16 13" preserveAspectRatio="none"><path d="M1 3.200Q1 1.500 2.600 1.500H5.800L7.200 3H13.400Q15 3 15 4.600V10.400Q15 12 13.400 12H2.600Q1 12 1 10.400Z" fill="#f3d858" stroke="#b08a14" stroke-width="1.500"/><path d="M2 4.600H14V7.500H2Z" fill="#fcf3b4"/><path d="M2 7.500H14V9H2Z" fill="#f8e68a"/></svg>
<div class="tr" style="left:133.5px;top:76.07px">按类型分</div>
<svg class="a" style="left:131.3px;top:85.49px" width="8.2" height="6.4" viewBox="0 0 16 13" preserveAspectRatio="none"><path d="M1 3.200Q1 1.500 2.600 1.500H5.800L7.200 3H13.400Q15 3 15 4.600V10.400Q15 12 13.400 12H2.600Q1 12 1 10.400Z" fill="#f3d858" stroke="#b08a14" stroke-width="1.500"/><path d="M2 4.600H14V7.500H2Z" fill="#fcf3b4"/><path d="M2 7.500H14V9H2Z" fill="#f8e68a"/></svg>
<div class="tr" style="left:141.2px;top:85.94px">01服装产品</div>
<svg class="a" style="left:126.2px;top:97.31px" width="3" height="3" viewBox="0 0 8 8"><path d="M1.5 0.5V7.5L7 4Z" fill="#444"/></svg>
<svg class="a" style="left:131.3px;top:95.36px" width="8.2" height="6.4" viewBox="0 0 16 13" preserveAspectRatio="none"><path d="M1 3.200Q1 1.500 2.600 1.500H5.800L7.200 3H13.400Q15 3 15 4.600V10.400Q15 12 13.400 12H2.600Q1 12 1 10.400Z" fill="#f3d858" stroke="#b08a14" stroke-width="1.500"/><path d="M2 4.600H14V7.500H2Z" fill="#fcf3b4"/><path d="M2 7.500H14V9H2Z" fill="#f8e68a"/></svg>
<div class="tr" style="left:141.2px;top:95.81px">02电子产品</div>
<svg class="a" style="left:126.2px;top:107.18px" width="3" height="3" viewBox="0 0 8 8"><path d="M0.5 1.5H7.5L4 7Z" fill="#444"/></svg>
<svg class="a" style="left:131.3px;top:105.23px" width="8.2" height="6.4" viewBox="0 0 16 13" preserveAspectRatio="none"><path d="M1 3.200Q1 1.500 2.600 1.500H5.800L7.200 3H13.400Q15 3 15 4.600V10.400Q15 12 13.400 12H2.600Q1 12 1 10.400Z" fill="#f3d858" stroke="#b08a14" stroke-width="1.500"/><path d="M2 4.600H14V7.500H2Z" fill="#fcf3b4"/><path d="M2 7.500H14V9H2Z" fill="#f8e68a"/></svg>
<div class="tr" style="left:141.2px;top:105.68px">03食品保健食品产品</div>
<svg class="a" style="left:138.9px;top:115.1px" width="8.2" height="6.4" viewBox="0 0 16 13" preserveAspectRatio="none"><path d="M1 3.200Q1 1.500 2.600 1.500H5.800L7.200 3H13.400Q15 3 15 4.600V10.400Q15 12 13.400 12H2.600Q1 12 1 10.400Z" fill="#f3d858" stroke="#b08a14" stroke-width="1.500"/><path d="M2 4.600H14V7.500H2Z" fill="#fcf3b4"/><path d="M2 7.500H14V9H2Z" fill="#f8e68a"/></svg>
<div class="tr" style="left:148.79999999999998px;top:115.55px">保健食品</div>
<svg class="a" style="left:138.9px;top:124.96999999999998px" width="8.2" height="6.4" viewBox="0 0 16 13" preserveAspectRatio="none"><path d="M1 3.200Q1 1.500 2.600 1.500H5.800L7.200 3H13.400Q15 3 15 4.600V10.400Q15 12 13.400 12H2.600Q1 12 1 10.400Z" fill="#f3d858" stroke="#b08a14" stroke-width="1.500"/><path d="M2 4.600H14V7.500H2Z" fill="#fcf3b4"/><path d="M2 7.500H14V9H2Z" fill="#f8e68a"/></svg>
<div class="tr" style="left:148.79999999999998px;top:125.42px">食品</div>
<svg class="a" style="left:126.2px;top:136.79px" width="3" height="3" viewBox="0 0 8 8"><path d="M1.5 0.5V7.5L7 4Z" fill="#444"/></svg>
<svg class="a" style="left:131.3px;top:134.84px" width="8.2" height="6.4" viewBox="0 0 16 13" preserveAspectRatio="none"><path d="M1 3.200Q1 1.500 2.600 1.500H5.800L7.200 3H13.400Q15 3 15 4.600V10.400Q15 12 13.400 12H2.600Q1 12 1 10.400Z" fill="#f3d858" stroke="#b08a14" stroke-width="1.500"/><path d="M2 4.600H14V7.500H2Z" fill="#fcf3b4"/><path d="M2 7.500H14V9H2Z" fill="#f8e68a"/></svg>
<div class="tr" style="left:141.2px;top:135.29px">04化妆品产品</div>
<svg class="a" style="left:131.3px;top:144.71px" width="8.2" height="6.4" viewBox="0 0 16 13" preserveAspectRatio="none"><path d="M1 3.200Q1 1.500 2.600 1.500H5.800L7.200 3H13.400Q15 3 15 4.600V10.400Q15 12 13.400 12H2.600Q1 12 1 10.400Z" fill="#f3d858" stroke="#b08a14" stroke-width="1.500"/><path d="M2 4.600H14V7.500H2Z" fill="#fcf3b4"/><path d="M2 7.500H14V9H2Z" fill="#f8e68a"/></svg>
<div class="tr" style="left:141.2px;top:145.16px">05原材料</div>
<svg class="a" style="left:131.3px;top:154.58px" width="8.2" height="6.4" viewBox="0 0 16 13" preserveAspectRatio="none"><path d="M1 3.200Q1 1.500 2.600 1.500H5.800L7.200 3H13.400Q15 3 15 4.600V10.400Q15 12 13.400 12H2.600Q1 12 1 10.400Z" fill="#f3d858" stroke="#b08a14" stroke-width="1.500"/><path d="M2 4.600H14V7.500H2Z" fill="#fcf3b4"/><path d="M2 7.500H14V9H2Z" fill="#f8e68a"/></svg>
<div class="tr" style="left:141.2px;top:155.03px">06其他</div>
<svg class="a" style="left:123.89999999999999px;top:164.45000000000002px" width="8.2" height="6.4" viewBox="0 0 16 13" preserveAspectRatio="none"><path d="M1 3.200Q1 1.500 2.600 1.500H5.800L7.200 3H13.400Q15 3 15 4.600V10.400Q15 12 13.400 12H2.600Q1 12 1 10.400Z" fill="#f3d858" stroke="#b08a14" stroke-width="1.500"/><path d="M2 4.600H14V7.500H2Z" fill="#fcf3b4"/><path d="M2 7.500H14V9H2Z" fill="#f8e68a"/></svg>
<div class="tr" style="left:133.79999999999998px;top:164.90px">未分类</div>
<div class="a" style="left:268.3px;top:61.9px;width:629.7px;height:187.29999999999998px;background:#fff;border-left:.5px solid #d0d0d0"></div>
<div class="gh" style="left:268.3px;top:61.9px;width:629.7px;height:12.000000000000007px"></div>
<div class="ght" style="left:268.3px;width:19.69999999999999px;top:65.9px;overflow:hidden">序号</div>
<div class="ght" style="left:288px;width:55.5px;top:65.9px;overflow:hidden">产品编码</div>
<div class="a" style="left:288px;top:62.9px;width:.5px;height:10.000000000000007px;background:#f4f4f4;box-shadow:-.4px 0 0 #e0e0e0"></div>
<div class="ght" style="left:343.5px;width:75.5px;top:65.9px;overflow:hidden">名称</div>
<div class="a" style="left:343.5px;top:62.9px;width:.5px;height:10.000000000000007px;background:#f4f4f4;box-shadow:-.4px 0 0 #e0e0e0"></div>
<div class="ght" style="left:419px;width:75px;top:65.9px;overflow:hidden">英文名称</div>
<div class="a" style="left:419px;top:62.9px;width:.5px;height:10.000000000000007px;background:#f4f4f4;box-shadow:-.4px 0 0 #e0e0e0"></div>
<div class="ght" style="left:494px;width:37px;top:65.9px;overflow:hidden">产品型号</div>
<div class="a" style="left:494px;top:62.9px;width:.5px;height:10.000000000000007px;background:#f4f4f4;box-shadow:-.4px 0 0 #e0e0e0"></div>
<div class="ght" style="left:531px;width:38px;top:65.9px;overflow:hidden">参考产品代...</div>
<div class="a" style="left:531px;top:62.9px;width:.5px;height:10.000000000000007px;background:#f4f4f4;box-shadow:-.4px 0 0 #e0e0e0"></div>
<div class="ght" style="left:569px;width:38px;top:65.9px;overflow:hidden">所属项目编...</div>
<div class="a" style="left:569px;top:62.9px;width:.5px;height:10.000000000000007px;background:#f4f4f4;box-shadow:-.4px 0 0 #e0e0e0"></div>
<div class="ght" style="left:607px;width:37px;top:65.9px;overflow:hidden">产品描述</div>
<div class="a" style="left:607px;top:62.9px;width:.5px;height:10.000000000000007px;background:#f4f4f4;box-shadow:-.4px 0 0 #e0e0e0"></div>
<div class="ght" style="left:644px;width:39px;top:65.9px;overflow:hidden">产品负责人</div>
<div class="a" style="left:644px;top:62.9px;width:.5px;height:10.000000000000007px;background:#f4f4f4;box-shadow:-.4px 0 0 #e0e0e0"></div>
<div class="ght" style="left:683px;width:74px;top:65.9px;overflow:hidden">备注</div>
<div class="a" style="left:683px;top:62.9px;width:.5px;height:10.000000000000007px;background:#f4f4f4;box-shadow:-.4px 0 0 #e0e0e0"></div>
<div class="ght" style="left:757px;width:36px;top:65.9px;overflow:hidden">创建者</div>
<div class="a" style="left:757px;top:62.9px;width:.5px;height:10.000000000000007px;background:#f4f4f4;box-shadow:-.4px 0 0 #e0e0e0"></div>
<div class="ght" style="left:793px;width:38px;top:65.9px;overflow:hidden">修改者</div>
<div class="a" style="left:793px;top:62.9px;width:.5px;height:10.000000000000007px;background:#f4f4f4;box-shadow:-.4px 0 0 #e0e0e0"></div>
<div class="ght" style="left:831px;width:38.5px;top:65.9px;overflow:hidden">检出者</div>
<div class="a" style="left:831px;top:62.9px;width:.5px;height:10.000000000000007px;background:#f4f4f4;box-shadow:-.4px 0 0 #e0e0e0"></div>
<div class="ght" style="left:885.4px;top:65.9px;text-align:left;overflow:hidden;width:6.6px">创建时间</div>
<div class="a" style="left:869.5px;top:62.9px;width:.5px;height:10.000000000000007px;background:#f4f4f4;box-shadow:-.4px 0 0 #e0e0e0"></div>
<div class="row" style="left:268.90000000000003px;width:629.1px;top:73.30px;height:9.450000000000001px;background:#fff">
<div class="c n" style="left:0;width:19.69999999999999px;text-align:center;top:2.35px">1</div>
<div class="c n" style="left:20.599999999999987px;top:2.35px">010101010006</div>
<div class="c" style="left:75.79999999999998px;top:2.35px">蚕丝双人被</div>
<div class="c n" style="left:226.1px;top:2.35px">203*229cm</div>
<div class="c" style="left:489.5px;top:2.35px">周锐宇</div>
<div class="c" style="left:525.5px;top:2.35px">周锐宇</div>
<div class="c n" style="left:604.8000000000001px;top:2.35px">2017-1</div>
</div>
<div class="row" style="left:268.90000000000003px;width:629.1px;top:82.70px;height:9.450000000000001px;background:#e9f1fc">
<div class="c n" style="left:0;width:19.69999999999999px;text-align:center;top:2.35px">2</div>
<div class="c n" style="left:20.599999999999987px;top:2.35px">010101010007</div>
<div class="c" style="left:75.79999999999998px;top:2.35px">蚕丝双人被-袋</div>
<div class="c" style="left:489.5px;top:2.35px">周锐宇</div>
<div class="c" style="left:525.5px;top:2.35px">周锐宇</div>
<div class="c n" style="left:604.8000000000001px;top:2.35px">2017-1</div>
</div>
<div class="row" style="left:268.90000000000003px;width:629.1px;top:92.10px;height:9.450000000000001px;background:#fff">
<div class="c n" style="left:0;width:19.69999999999999px;text-align:center;top:2.35px">3</div>
<div class="c n" style="left:20.599999999999987px;top:2.35px">010101020005</div>
<div class="c" style="left:75.79999999999998px;top:2.35px">蚕丝单人被</div>
<div class="c n" style="left:226.1px;top:2.35px">150*220cm</div>
<div class="c" style="left:489.5px;top:2.35px">周锐宇</div>
<div class="c" style="left:525.5px;top:2.35px">周锐宇</div>
<div class="c n" style="left:604.8000000000001px;top:2.35px">2017-1</div>
</div>
<div class="row" style="left:268.90000000000003px;width:629.1px;top:101.50px;height:9.450000000000001px;background:#e9f1fc">
<div class="c n" style="left:0;width:19.69999999999999px;text-align:center;top:2.35px">4</div>
<div class="c n" style="left:20.599999999999987px;top:2.35px">010101030005</div>
<div class="c" style="left:75.79999999999998px;top:2.35px">蚕丝空调被</div>
<div class="c n" style="left:226.1px;top:2.35px">203*229cm</div>
<div class="c" style="left:489.5px;top:2.35px">周锐宇</div>
<div class="c" style="left:525.5px;top:2.35px">周锐宇</div>
<div class="c n" style="left:604.8000000000001px;top:2.35px">2017-1</div>
</div>
<div class="row" style="left:268.90000000000003px;width:629.1px;top:110.90px;height:9.450000000000001px;background:#fff">
<div class="c n" style="left:0;width:19.69999999999999px;text-align:center;top:2.35px">5</div>
<div class="c n" style="left:20.599999999999987px;top:2.35px">010101030007</div>
<div class="c" style="left:75.79999999999998px;top:2.35px">蚕丝空调被-袋</div>
<div class="c" style="left:489.5px;top:2.35px">周锐宇</div>
<div class="c" style="left:525.5px;top:2.35px">周锐宇</div>
<div class="c n" style="left:604.8000000000001px;top:2.35px">2017-1</div>
</div>
<div class="row" style="left:268.90000000000003px;width:629.1px;top:120.30px;height:9.450000000000001px;background:#e9f1fc">
<div class="c n" style="left:0;width:19.69999999999999px;text-align:center;top:2.35px">6</div>
<div class="c n" style="left:20.599999999999987px;top:2.35px">010102010006</div>
<div class="c" style="left:75.79999999999998px;top:2.35px">床垫</div>
<div class="c n" style="left:226.1px;top:2.35px">180*200cm</div>
<div class="c" style="left:489.5px;top:2.35px">周锐宇</div>
<div class="c" style="left:525.5px;top:2.35px">周锐宇</div>
<div class="c n" style="left:604.8000000000001px;top:2.35px">2017-1</div>
</div>
<div class="row" style="left:268.90000000000003px;width:629.1px;top:129.70px;height:9.450000000000001px;background:#fff">
<div class="c n" style="left:0;width:19.69999999999999px;text-align:center;top:2.35px">7</div>
<div class="c n" style="left:20.599999999999987px;top:2.35px">010102010007</div>
<div class="c" style="left:75.79999999999998px;top:2.35px">蚕丝床垫</div>
<div class="c n" style="left:226.1px;top:2.35px">150*200cm</div>
<div class="c" style="left:489.5px;top:2.35px">周锐宇</div>
<div class="c" style="left:525.5px;top:2.35px">周锐宇</div>
<div class="c n" style="left:604.8000000000001px;top:2.35px">2017-1</div>
</div>
<div class="row" style="left:268.90000000000003px;width:629.1px;top:139.10px;height:9.450000000000001px;background:#e9f1fc">
<div class="c n" style="left:0;width:19.69999999999999px;text-align:center;top:2.35px">8</div>
<div class="c n" style="left:20.599999999999987px;top:2.35px">010102010008</div>
<div class="c" style="left:75.79999999999998px;top:2.35px">蚕丝床垫</div>
<div class="c n" style="left:226.1px;top:2.35px">180*200cm</div>
<div class="c" style="left:489.5px;top:2.35px">周锐宇</div>
<div class="c" style="left:525.5px;top:2.35px">周锐宇</div>
<div class="c n" style="left:604.8000000000001px;top:2.35px">2017-1</div>
</div>
<div class="row" style="left:268.90000000000003px;width:629.1px;top:148.50px;height:9.450000000000001px;background:#fff">
<div class="c n" style="left:0;width:19.69999999999999px;text-align:center;top:2.35px">9</div>
<div class="c n" style="left:20.599999999999987px;top:2.35px">010102020005</div>
<div class="c" style="left:75.79999999999998px;top:2.35px">蚕丝床垫</div>
<div class="c n" style="left:226.1px;top:2.35px">100*200cm</div>
<div class="c" style="left:489.5px;top:2.35px">周锐宇</div>
<div class="c" style="left:525.5px;top:2.35px">周锐宇</div>
<div class="c n" style="left:604.8000000000001px;top:2.35px">2017-1</div>
</div>
<div class="row" style="left:268.90000000000003px;width:629.1px;top:157.90px;height:9.450000000000001px;background:#e9f1fc">
<div class="c n" style="left:0;width:19.69999999999999px;text-align:center;top:2.35px">10</div>
<div class="c n" style="left:20.599999999999987px;top:2.35px">010103020003</div>
<div class="c" style="left:75.79999999999998px;top:2.35px">蚕丝B型枕</div>
<div class="c n" style="left:226.1px;top:2.35px">35x60cm</div>
<div class="c" style="left:489.5px;top:2.35px">周锐宇</div>
<div class="c" style="left:525.5px;top:2.35px">周锐宇</div>
<div class="c n" style="left:604.8000000000001px;top:2.35px">2017-1</div>
</div>
<div class="row" style="left:268.90000000000003px;width:629.1px;top:167.30px;height:9.450000000000001px;background:#fff">
<div class="c n" style="left:0;width:19.69999999999999px;text-align:center;top:2.35px">11</div>
<div class="c n" style="left:20.599999999999987px;top:2.35px">010103030002</div>
<div class="c" style="left:75.79999999999998px;top:2.35px">蚕丝夏凉枕</div>
<div class="c n" style="left:226.1px;top:2.35px">30x60cm</div>
<div class="c" style="left:489.5px;top:2.35px">周锐宇</div>
<div class="c" style="left:525.5px;top:2.35px">周锐宇</div>
<div class="c n" style="left:604.8000000000001px;top:2.35px">2017-1</div>
</div>
<div class="row" style="left:268.90000000000003px;width:629.1px;top:176.70px;height:9.450000000000001px;background:#e9f1fc">
<div class="c n" style="left:0;width:19.69999999999999px;text-align:center;top:2.35px">12</div>
<div class="c n" style="left:20.599999999999987px;top:2.35px">010199010001</div>
<div class="c" style="left:75.79999999999998px;top:2.35px">蚕丝床品四件套</div>
<div class="c" style="left:226.1px;top:2.35px">粉色</div>
<div class="c" style="left:489.5px;top:2.35px">周锐宇</div>
<div class="c" style="left:525.5px;top:2.35px">周锐宇</div>
<div class="c n" style="left:604.8000000000001px;top:2.35px">2017-1</div>
</div>
<div class="row" style="left:268.90000000000003px;width:629.1px;top:186.10px;height:9.450000000000001px;background:#fff">
<div class="c n" style="left:0;width:19.69999999999999px;text-align:center;top:2.35px">13</div>
<div class="c n" style="left:20.599999999999987px;top:2.35px">010199010002</div>
<div class="c" style="left:75.79999999999998px;top:2.35px">蚕丝床品四件套</div>
<div class="c" style="left:226.1px;top:2.35px">咖啡色</div>
<div class="c" style="left:489.5px;top:2.35px">周锐宇</div>
<div class="c" style="left:525.5px;top:2.35px">周锐宇</div>
<div class="c n" style="left:604.8000000000001px;top:2.35px">2017-1</div>
</div>
<div class="row" style="left:268.90000000000003px;width:629.1px;top:195.50px;height:9.450000000000001px;background:#e9f1fc">
<div class="c n" style="left:0;width:19.69999999999999px;text-align:center;top:2.35px">14</div>
<div class="c n" style="left:20.599999999999987px;top:2.35px">010201020001</div>
<div class="c" style="left:75.79999999999998px;top:2.35px">皇后调整型纹胸罩</div>
<div class="c n" style="left:226.1px;top:2.35px">32/70A</div>
<div class="c" style="left:489.5px;top:2.35px">周锐宇</div>
<div class="c" style="left:525.5px;top:2.35px">周锐宇</div>
<div class="c n" style="left:604.8000000000001px;top:2.35px">2017-1</div>
</div>
<div class="row" style="left:268.90000000000003px;width:629.1px;top:204.90px;height:9.450000000000001px;background:#fff">
<div class="c n" style="left:0;width:19.69999999999999px;text-align:center;top:2.35px">15</div>
<div class="c n" style="left:20.599999999999987px;top:2.35px">010201020002</div>
<div class="c" style="left:75.79999999999998px;top:2.35px">皇后调整型纹胸罩</div>
<div class="c n" style="left:226.1px;top:2.35px">34/75A</div>
<div class="c" style="left:489.5px;top:2.35px">周锐宇</div>
<div class="c" style="left:525.5px;top:2.35px">周锐宇</div>
<div class="c n" style="left:604.8000000000001px;top:2.35px">2017-1</div>
</div>
<div class="row" style="left:268.90000000000003px;width:629.1px;top:214.30px;height:9.450000000000001px;background:#e9f1fc">
<div class="c n" style="left:0;width:19.69999999999999px;text-align:center;top:2.35px">16</div>
<div class="c n" style="left:20.599999999999987px;top:2.35px">010201020003</div>
<div class="c" style="left:75.79999999999998px;top:2.35px">皇后调整型纹胸罩</div>
<div class="c n" style="left:226.1px;top:2.35px">36/80A</div>
<div class="c" style="left:489.5px;top:2.35px">周锐宇</div>
<div class="c" style="left:525.5px;top:2.35px">周锐宇</div>
<div class="c n" style="left:604.8000000000001px;top:2.35px">2017-1</div>
</div>
<div class="row" style="left:268.90000000000003px;width:629.1px;top:223.70px;height:9.450000000000001px;background:#fff">
<div class="c n" style="left:0;width:19.69999999999999px;text-align:center;top:2.35px">17</div>
<div class="c n" style="left:20.599999999999987px;top:2.35px">010201020004</div>
<div class="c" style="left:75.79999999999998px;top:2.35px">皇后调整型纹胸罩</div>
<div class="c n" style="left:226.1px;top:2.35px">38/85A</div>
<div class="c" style="left:489.5px;top:2.35px">周锐宇</div>
<div class="c" style="left:525.5px;top:2.35px">周锐宇</div>
<div class="c n" style="left:604.8000000000001px;top:2.35px">2017-1</div>
</div>
<div class="row" style="left:268.90000000000003px;width:629.1px;top:233.10px;height:9.450000000000001px;background:#e9f1fc">
<div class="c n" style="left:0;width:19.69999999999999px;text-align:center;top:2.35px">18</div>
<div class="c n" style="left:20.599999999999987px;top:2.35px">010201020005</div>
<div class="c" style="left:75.79999999999998px;top:2.35px">皇后调整型纹胸罩</div>
<div class="c n" style="left:226.1px;top:2.35px">40/90A</div>
<div class="c" style="left:489.5px;top:2.35px">周锐宇</div>
<div class="c" style="left:525.5px;top:2.35px">周锐宇</div>
<div class="c n" style="left:604.8000000000001px;top:2.35px">2017-1</div>
</div>
<div class="row" style="left:268.90000000000003px;width:629.1px;top:242.50px;height:9.450000000000001px;background:#fff">
<div class="c n" style="left:0;width:19.69999999999999px;text-align:center;top:2.35px">19</div>
<div class="c n" style="left:20.599999999999987px;top:2.35px">010201020006</div>
<div class="c" style="left:75.79999999999998px;top:2.35px">皇后调整型纹胸罩</div>
<div class="c n" style="left:226.1px;top:2.35px">42/95A</div>
<div class="c" style="left:489.5px;top:2.35px">周锐宇</div>
<div class="c" style="left:525.5px;top:2.35px">周锐宇</div>
<div class="c n" style="left:604.8000000000001px;top:2.35px">2017-1</div>
</div>
<div class="a" style="left:892.6px;top:62.4px;width:5.4px;height:11px;background:#e9e9e9"></div>
<div class="a" style="left:894px;top:80px;width:3.8px;height:80.600px;background:#d2d2d2"></div>
<div class="a" style="left:897.800px;top:223.200px;width:2.200px;height:20px;background:#4cb257"></div>
<svg class="a" style="left:894px;top:76.6px" width="3" height="2.600" viewBox="0 0 6 5"><path d="M3 .5L5.800 4.500H.2Z" fill="#555"/></svg>
</div>
</body></html>
